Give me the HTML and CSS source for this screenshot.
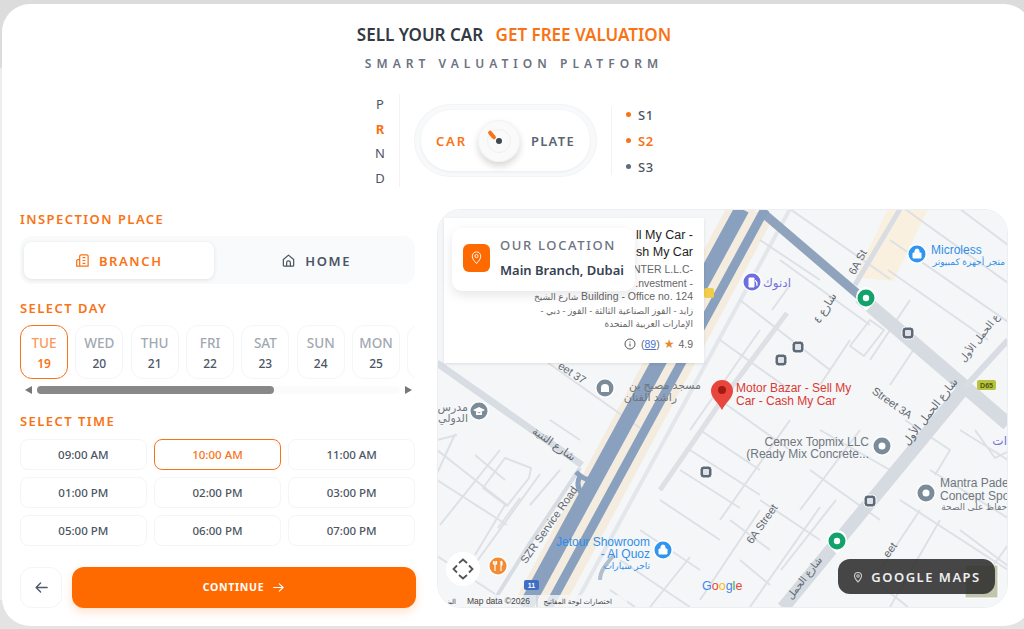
FILE: index.html
```html
<!DOCTYPE html>
<html lang="en">
<head>
<meta charset="utf-8">
<title>Sell Your Car</title>
<link rel="stylesheet" href="styles.css">
</head>
<body>
<main class="card">
  <header class="head">
    <h1 class="title"><span>SELL YOUR CAR</span> <em>GET FREE VALUATION</em></h1>
    <p class="sub">SMART VALUATION PLATFORM</p>
  </header>

  <section class="console">
    <div class="gears"><span>P</span><span class="on">R</span><span>N</span><span>D</span></div>
    <div class="pill">
      <div class="pill-in">
        <span class="pill-l">CAR</span>
        <span class="knob"><span class="knob-ring"></span><span class="knob-tick"></span><span class="knob-dot"></span></span>
        <span class="pill-r">PLATE</span>
      </div>
    </div>
    <div class="modes">
      <div class="mode hot"><i></i>S1</div>
      <div class="mode hot act"><i></i>S2</div>
      <div class="mode"><i></i>S3</div>
    </div>
  </section>

  <section class="main">
    <div class="form">
      <h2 class="lab">INSPECTION PLACE</h2>
      <div class="tabs">
        <button class="tab sel">
          <svg class="ic" viewBox="0 0 16 16" fill="none" stroke="currentColor" stroke-width="1.3"><path d="M5 14V3.5A1.5 1.5 0 0 1 6.500 2h6A1.500 1.500 0 0 1 14 3.500V14zM5 7H3a1.200 1.200 0 0 0-1.200 1.200V14H5M8 5h3M8 8h3M8 11h3"/></svg>
          BRANCH
        </button>
        <button class="tab">
          <svg class="ic" viewBox="0 0 16 16" fill="none" stroke="currentColor" stroke-width="1.300" stroke-linejoin="round"><path d="M2.500 7 8 2.300 13.500 7v6.200a.8.800 0 0 1-.8.800H3.300a.8.800 0 0 1-.8-.8z"/><path d="M6 14v-3.500a2 2 0 0 1 4 0V14"/></svg>
          HOME
        </button>
      </div>

      <h2 class="lab day-lab">SELECT DAY</h2>
      <div class="days">
        <div class="day sel"><b>TUE</b><span>19</span></div>
        <div class="day"><b>WED</b><span>20</span></div>
        <div class="day"><b>THU</b><span>21</span></div>
        <div class="day"><b>FRI</b><span>22</span></div>
        <div class="day"><b>SAT</b><span>23</span></div>
        <div class="day"><b>SUN</b><span>24</span></div>
        <div class="day"><b>MON</b><span>25</span></div>
        <div class="day day-cut"></div>
      </div>
      <div class="bar"><i class="tri-l"></i><span class="track"><span class="thumb"></span></span><i class="tri-r"></i></div>

      <h2 class="lab time-lab">SELECT TIME</h2>
      <div class="times">
        <div class="time">09:00 AM</div>
        <div class="time sel">10:00 AM</div>
        <div class="time">11:00 AM</div>
        <div class="time">01:00 PM</div>
        <div class="time">02:00 PM</div>
        <div class="time">03:00 PM</div>
        <div class="time">05:00 PM</div>
        <div class="time">06:00 PM</div>
        <div class="time">07:00 PM</div>
      </div>

      <div class="actions">
        <button class="back" aria-label="Back">
          <svg viewBox="0 0 16 16" fill="none" stroke="currentColor" stroke-width="1.500" stroke-linecap="round" stroke-linejoin="round"><path d="M14 8H2.500M7 3.200 2.300 8 7 12.800"/></svg>
        </button>
        <button class="go">CONTINUE
          <svg viewBox="0 0 16 16" fill="none" stroke="currentColor" stroke-width="1.400" stroke-linecap="round" stroke-linejoin="round"><path d="M2 8h11.500M9 3.500 13.700 8 9 12.500"/></svg>
        </button>
      </div>
    </div>

    <div class="map">
      <svg class="tiles" viewBox="437 209 571 399" xmlns="http://www.w3.org/2000/svg">
        <rect x="437" y="209" width="571" height="399" fill="#f5f6f8"/>
        <path d="M888 209h40l-35 72-38-4z" fill="#f9f0df"/>
        <path d="M752 209 537 608" stroke="#f3ecdf" stroke-width="46" fill="none"/>
        <path d="M790 209 573 608" stroke="#e3e6ea" stroke-width="4" fill="none"/>

        <g fill="none" stroke="#dde1e6" stroke-width="2" stroke-linejoin="round">
          <path d="M437 480l70 45 M437 440l20-5 M455 434l-20 44 M500 450l-60 75 M505 458l-22 30 24 18 22-28 2-10-26-10z M475 455l30 25 M550 420l30 20 M520 498l-22 30 M540 474l-65 90 M437 556l58 38 M437 450l70 55 M505 505l-30 50 M560 470l-30 35 M530 350l110 78"/>
          <path d="M680 470l60 38 M660 500l60 40 M640 530l60 40 M620 560l70 47 M700 430l60 40 M690 450l70 45 M720 400l70 50 M610 590l25 17 M650 607l40-50"/>
          <path d="M760 500l60 40 M730 520l40 30 M740 560l30 25 M700 600l60-90 M750 607l70-100 M790 420l-70 100 M860 430l-60 80 M810 470l70 50 M836 500l-55 70"/>
          <path d="M790 209l100 70 M780 260l90 65 M740 300l90 70 M720 340l70 50 M760 240l60 40 M850 340l-30 45 M870 320l14 10-20 26-14-10z M820 430l70 40 M910 300l-40 60 M960 209l48 36 M905 209l103 74 M890 240l118 82 M888 270l100 70 M920 340l-30 45"/>
          <path d="M905 420l45 30-15 25 M960 430l48 30 M930 470l78 48 M900 500l108 70 M880 570l40-60 M940 520l-50 87 M975 430l20 28 20-10 M960 530l48 36 M990 570l18-25 M880 585l28 22"/>
          <path d="M790 285l-18 25 M760 330l-70 100"/>
        </g>

        <g fill="none" stroke-linecap="butt">
          <path d="M437 363l145 102" stroke="#d8dde3" stroke-width="7"/>
          <path d="M580 468l-50 75-40 64" stroke="#d8dde3" stroke-width="4"/>
          <path d="M855 285 900 209" stroke="#d8dde3" stroke-width="5"/>
          <path d="M860 297 965 387 1008 424" stroke="#d5dbe1" stroke-width="14"/>
          <path d="M965 387 783 608" stroke="#d5dbe1" stroke-width="13"/>
          <path d="M965 387 1008 340" stroke="#d8dde3" stroke-width="6"/>
          <path d="M787 313 722 400 660 490" stroke="#dde1e6" stroke-width="5"/>
          <path d="M763 213 860 296" stroke="#8fa3bd" stroke-width="9"/>
          <path d="M742 209 525 608" stroke="#8aa0bf" stroke-width="15"/>
          <path d="M765 209 548 608" stroke="#8aa0bf" stroke-width="9"/>
          <path d="M600 470c-8 12-14 12-24 2M590 500c-10-6-15-14-10-24" stroke="#8aa0bf" stroke-width="5"/>
          <path d="M600 580c0-10 8-18 14-25" stroke="#b4bfce" stroke-width="4"/>
        </g>

        <text class="rd" transform="translate(552 447) rotate(35)" text-anchor="middle">شارع الثنية</text>
        <text class="rd" transform="translate(570 376) rotate(33)" text-anchor="middle">eet 37</text>
        <text class="rd" transform="translate(552 527) rotate(-55)" text-anchor="middle">SZR Service Road</text>
        <text class="rd" transform="translate(861 264) rotate(-62)" text-anchor="middle">6A St</text>
        <text class="rd" transform="translate(828 310) rotate(-58)" text-anchor="middle">شارع ٤</text>
        <text class="rd" transform="translate(765 526) rotate(-55)" text-anchor="middle">6A Street</text>
        <text class="rd" transform="translate(890 406) rotate(35)" text-anchor="middle">Street 3A</text>
        <text class="rd rd-s" transform="translate(982 340) rotate(-52)" text-anchor="middle">ع الحمل الأول</text>
        <text class="rd" transform="translate(933 414) rotate(-52)" text-anchor="middle">شارع الحمل الأول</text>
        <text class="rd rd-s" transform="translate(807 580) rotate(-52)" text-anchor="middle">شارع الحمل</text>
        <text class="rd" transform="translate(893 552) rotate(-55)" text-anchor="middle">eet</text>

        <g class="shield"><rect x="977" y="380" width="19" height="10" rx="2" fill="#b9c23c"/><text x="986.500" y="388" text-anchor="middle">D65</text></g>
        <g class="shield"><rect x="524" y="580" width="15" height="10" rx="2" fill="#3f6fc4"/><text class="sh-w" x="531.500" y="588" text-anchor="middle">11</text></g>
        <g class="shield"><rect x="704" y="288" width="10" height="10" rx="2" fill="#f1cc4d"/></g>

        <text class="poi-b" x="931" y="254">Microless</text>
        <text class="poi-b sm" x="1005" y="265" text-anchor="end">متجر أجهزة كمبيوتر</text>
        <text class="poi-p" x="791" y="287" text-anchor="end">ادنوك</text>
        <text class="poi-r" x="736" y="392">Motor Bazar - Sell My</text>
        <text class="poi-r" x="736" y="405">Car - Cash My Car</text>
        <text class="poi-g" x="869" y="446" text-anchor="end">Cemex Topmix LLC</text>
        <text class="poi-g" x="869" y="458" text-anchor="end">(Ready Mix Concrete...</text>
        <text class="poi-g" x="940" y="487">Mantra Pade</text>
        <text class="poi-g" x="940" y="500">Concept Spo</text>
        <text class="poi-g sm" x="1007" y="510" text-anchor="end">حفاظ على الصحة</text>
        <text class="poi-g ar" x="701" y="389" text-anchor="end">مسجد مصبح بن</text>
        <text class="poi-g ar" x="677" y="401" text-anchor="end">راشد الفنان</text>
        <text class="poi-g ar" x="468" y="411" text-anchor="end">مدرس</text>
        <text class="poi-g ar" x="468" y="422" text-anchor="end">الدولي</text>
        <text class="poi-b" x="650" y="546" text-anchor="end">Jetour Showroom</text>
        <text class="poi-b" x="650" y="558" text-anchor="end">- Al Quoz</text>
        <text class="poi-b sm" x="650" y="569" text-anchor="end">تاجر سيارات</text>
        <text class="poi-p" x="1007" y="445" text-anchor="end">ات</text>

        <path d="M866 311l-8-8a10 10 0 1 1 16 0z" fill="#fff"/><circle cx="866" cy="298" r="8.500" fill="#12a26b"/><circle cx="866" cy="298" r="3.200" fill="#fff"/>
        <path d="M837 554l-8-8a10 10 0 1 1 16 0z" fill="#fff"/><circle cx="837" cy="541" r="8.500" fill="#12a26b"/><circle cx="837" cy="541" r="3.200" fill="#fff"/>

        <g class="bus"><rect x="902" y="327" width="12" height="12" rx="3.500"/><rect x="905" y="330" width="6" height="6" rx="1" class="bus-in"/></g>
        <g class="bus"><rect x="792" y="341" width="12" height="12" rx="3.500"/><rect x="795" y="344" width="6" height="6" rx="1" class="bus-in"/></g>
        <g class="bus"><rect x="775" y="354" width="12" height="12" rx="3.500"/><rect x="778" y="357" width="6" height="6" rx="1" class="bus-in"/></g>
        <g class="bus"><rect x="700" y="466" width="12" height="12" rx="3.500"/><rect x="703" y="469" width="6" height="6" rx="1" class="bus-in"/></g>
        <g class="bus"><rect x="864" y="495" width="12" height="12" rx="3.500"/><rect x="867" y="498" width="6" height="6" rx="1" class="bus-in"/></g>

        <g><circle cx="917" cy="254" r="10" fill="#fff"/><circle cx="917" cy="254" r="8.500" fill="#2f95ee"/><path d="M913 253h8v5h-8zM915 253v-2a2 2 0 0 1 4 0v2" fill="#fff" stroke="#fff"/></g>
        <g><circle cx="752" cy="282" r="10" fill="#fff"/><circle cx="752" cy="282" r="8.500" fill="#6d6fdc"/><path d="M749 278h5v9h-5zM755 280l2 2v4" fill="#fff" stroke="#fff"/></g>
        <g><circle cx="663" cy="550" r="10" fill="#fff"/><circle cx="663" cy="550" r="8.500" fill="#2f95ee"/><path d="M659 549h8v5h-8zM661 549v-2a2 2 0 0 1 4 0v2" fill="#fff" stroke="#fff"/></g>
        <g><circle cx="498" cy="566" r="10" fill="#fff"/><circle cx="498" cy="566" r="8.500" fill="#f38b34"/><path d="M495 561v10M501 561v10M493.500 561v3h3v-3M501 561c1.500 1 1.500 4 0 5" fill="none" stroke="#fff" stroke-width="1.200"/></g>
        <g><circle cx="882" cy="446" r="10" fill="#fff"/><circle cx="882" cy="446" r="8.500" fill="#7a8b9a"/><circle cx="882" cy="446" r="3.500" fill="#fff"/></g>
        <g><circle cx="926" cy="493" r="10" fill="#fff"/><circle cx="926" cy="493" r="8.500" fill="#7a8b9a"/><circle cx="926" cy="493" r="3.500" fill="#fff"/></g>
        <g><circle cx="605" cy="388" r="10" fill="#fff"/><circle cx="605" cy="388" r="8.500" fill="#7a8b9a"/><path d="M601 392v-4a4 4 0 0 1 8 0v4z" fill="#fff"/></g>
        <g><circle cx="479" cy="411" r="10" fill="#fff"/><circle cx="479" cy="411" r="8.500" fill="#7a8b9a"/><path d="M473 410l6-3 6 3-6 3zM476 412v3h6v-3" fill="#fff"/></g>

        <path d="M722 410c-4-8-11-12-11-19a11 11 0 0 1 22 0c0 7-7 11-11 19z" fill="#e8453c"/><circle cx="722" cy="390" r="4" fill="#a31a14"/>

        <rect x="437" y="595" width="190" height="13" fill="#f5f6f8" opacity=".8"/>
        <text class="attr" x="467" y="604">Map data ©2026</text>
        <path d="M537 595v13" stroke="#c4c8ce"/>
        <text class="attr ar-s" x="612" y="604" text-anchor="end">اختصارات لوحة المفاتيح</text>
        <text class="attr ar-s" x="456" y="604" text-anchor="end">البنـ</text>
        <text class="glogo" x="702" y="590"><tspan fill="#4285f4">G</tspan><tspan fill="#ea4335">o</tspan><tspan fill="#fbbc05">o</tspan><tspan fill="#4285f4">g</tspan><tspan fill="#34a853">l</tspan><tspan fill="#ea4335">e</tspan></text>

        <rect x="965" y="565" width="33" height="33" fill="#c2c5ae" stroke="#fff"/>
        <circle cx="463" cy="569" r="17" fill="#fff"/>
        <path d="M459 563l4-3.500 4 3.500M459 575l4 3.500 4-3.500M457 565.500l-3.500 3.500 3.500 3.500M469 565.500l3.500 3.500-3.500 3.500" fill="none" stroke="#555" stroke-width="1.800"/>
      </svg>

      <div class="info">
        <p class="info-t">ll My Car -<br>sh My Car</p>
        <div class="info-a">
          <span class="ln">NTER L.L.C-</span>
          <span class="ln">.nvestment -</span>
          <span class="ln" dir="rtl">Building - Office no. 124 <span class="ara">شارع الشيخ</span></span>
          <span class="ln ara" dir="rtl">زايد - القوز الصناعية الثالثة - القوز - دبي -</span>
          <span class="ln ara" dir="rtl">الإمارات العربية المتحدة</span>
        </div>
        <p class="info-r">
          <svg class="i-ic" viewBox="0 0 12 12" fill="none" stroke="#555"><circle cx="6" cy="6" r="5"/><path d="M6 5.500v3M6 3.500v1"/></svg>
          <span class="i-n">(<u>89</u>)</span>
          <span class="star">★</span>
          <span>4.9</span>
        </p>
      </div>

      <div class="loc">
        <span class="loc-ic"><svg viewBox="0 0 16 16" fill="none" stroke="#fff" stroke-width="1"><path d="M8 14.500C5.500 11.500 3.500 9.500 3.500 6.500a4.500 4.500 0 0 1 9 0c0 3-2 5-4.500 8z"/><circle cx="8" cy="6.500" r="1.700"/></svg></span>
        <span class="loc-tx"><small>OUR LOCATION</small><strong>Main Branch, Dubai</strong></span>
      </div>

      <div class="gm">
        <svg viewBox="0 0 12 12" fill="none" stroke="#ccc" stroke-width="1.100"><path d="M6 11C4 8.800 2.500 7.200 2.500 5a3.500 3.500 0 0 1 7 0c0 2.200-1.500 3.800-3.500 6z"/><circle cx="6" cy="5" r="1.200"/></svg>
        GOOGLE MAPS
      </div>
    </div>
  </section>
</main>
</body>
</html>
```

FILE: styles.css
```css
* { box-sizing: border-box; }
html, body { height: 100%; }
body {
  margin: 0;
  height: 629px;
  overflow: hidden;
  background: linear-gradient(#dcdcdc 0 68px, #eeeeee 68px 600px, #e3e3e3 600px);
  font-family: "Noto Sans", "Open Sans", "DejaVu Sans", sans-serif;
  color: #4b5563;
}
button { font: inherit; border: 0; background: none; padding: 0; color: inherit; }

.card {
  margin: 4px 0 0 2px;
  width: 1030px;
  height: 622px;
  background: #fff;
  border-radius: 28px;
  padding-left: 18px;
  padding-right: 24px;
  display: flex;
  flex-direction: column;
}

.head { width: 988px; text-align: center; padding-top: 18px; }
.title { margin: 0; font-size: 17px; line-height: 26px; font-weight: 600; color: #333a44; }
.title span { margin-right: 8px; }
.title em { font-style: normal; color: #f97316; }
.sub { margin: 7px 0 0; font-size: 12px; line-height: 17px; font-weight: 600; letter-spacing: 5.050px; color: #6b7280; }

.console { display: flex; align-items: center; width: 988px; padding-left: 349px; margin-top: 21px; height: 95px; }
.gears {
  width: 31px;
  height: 93px;
  display: flex;
  flex-direction: column;
  justify-content: space-between;
  align-items: center;
  padding: 1px 8px 0 0;
  border-right: 1px solid #f1f3f5;
  font-size: 13px;
  line-height: 18px;
  color: #4b5563;
}
.gears .on { color: #f97316; font-weight: 700; }
.pill {
  margin-left: 14px;
  width: 183px;
  height: 73px;
  border-radius: 37px;
  background: #f8f9fa;
  padding: 6px 7px;
  box-shadow: inset 0 0 0 1px #f3f4f6;
}
.pill-in {
  height: 100%;
  border-radius: 31px;
  background: #fff;
  display: flex;
  align-items: center;
  justify-content: space-between;
  padding: 0 15px;
  box-shadow: 0 1px 3px rgba(0,0,0,.06);
  font-size: 13px;
  font-weight: 600;
  letter-spacing: 1.300px;
}
.pill-l { color: #f97316; letter-spacing: 1.800px; }
.pill-r { color: #5b6472; }
.knob {
  position: relative;
  width: 42px;
  height: 42px;
  border-radius: 50%;
  background: #fafafa;
  box-shadow: 0 4px 7px rgba(0,0,0,.16), inset 0 0 0 1px #f2f2f2;
  margin-left: 1px;
}
.knob-ring { position: absolute; left: 9px; top: 9px; width: 24px; height: 24px; border-radius: 50%; border: 1px solid #f0f0f0; }
.knob-tick { position: absolute; left: 9px; top: 13px; width: 10px; height: 4px; border-radius: 2px; background: #f97316; transform: rotate(50deg); }
.knob-dot { position: absolute; left: 18px; top: 18px; width: 6px; height: 6px; border-radius: 50%; background: #3f4753; }
.modes {
  margin-left: 14px;
  height: 68px;
  border-left: 1px solid #f1f3f5;
  padding-left: 14px;
  display: flex;
  flex-direction: column;
  justify-content: space-between;
}
.mode { display: flex; align-items: center; gap: 7px; font-size: 13px; line-height: 16px; font-weight: 500; letter-spacing: .5px; color: #4b5563; }
.mode i { width: 5px; height: 5px; border-radius: 50%; background: #5f6b7e; }
.mode.hot i { background: #f97316; }
.mode.act { color: #f97316; font-weight: 600; }

.main { display: flex; gap: 22px; margin-top: 21px; width: 988px; }
.form { width: 395px; flex: none; display: flex; flex-direction: column; padding-top: 1px; }

.lab { margin: 0; font-size: 13px; line-height: 18px; font-weight: 600; letter-spacing: 1.450px; color: #f97316; }

.tabs { display: flex; gap: 8px; margin-top: 8px; height: 48px; padding: 6px 4px 5px; border-radius: 12px; background: #f8fafc; }
.tab { flex: 1; display: flex; align-items: center; justify-content: center; gap: 9px; font-size: 13px; font-weight: 600; letter-spacing: 1.600px; color: #4b5563; border-radius: 8px; }
.tab.sel { background: #fff; color: #f97316; box-shadow: 0 1px 4px rgba(0,0,0,.1); }
.ic { width: 15px; height: 15px; }

.day-lab { margin-top: 15px; }
.days { display: flex; gap: 7.350px; margin-top: 8px; overflow: hidden; }
.day {
  flex: none;
  width: 48px;
  height: 54px;
  border: 1px solid #f4f5f7;
  border-radius: 12px;
  display: flex;
  flex-direction: column;
  align-items: center;
  justify-content: center;
  padding-top: 2px;
}
.day b { font-size: 13.500px; line-height: 18px; font-weight: 500; color: #a2a8b2; }
.day span { font-size: 12px; line-height: 18px; font-weight: 500; color: #4b5563; margin-top: 3px; }
.day.sel { border-color: #f97316; }
.day.sel b { color: #fb9a5c; }
.day.sel span { color: #f97316; font-weight: 600; }

.bar { display: flex; align-items: center; height: 11px; margin-top: 5px; padding: 0 3px 0 5px; gap: 5px; }
.tri-l, .tri-r { flex: none; width: 0; height: 0; border-top: 4px solid transparent; border-bottom: 4px solid transparent; }
.tri-l { border-right: 7px solid #777; }
.tri-r { border-left: 7px solid #777; }
.track { flex: 1; height: 8px; background: #fbfbfb; border-radius: 4px; }
.thumb { display: block; width: 237px; height: 8px; background: #888; border-radius: 4px; }

.time-lab { margin-top: 17px; }
.times { display: grid; grid-template-columns: repeat(3, 1fr); gap: 7.500px; margin-top: 9px; }
.time {
  height: 30.500px;
  display: flex;
  align-items: center;
  justify-content: center;
  border: 1px solid #f4f5f7;
  border-radius: 8px;
  font-size: 11.500px;
  font-weight: 500;
  color: #4b5563;
}
.time.sel { border-color: #f97316; color: #f97316; }

.actions { display: flex; gap: 10px; margin-top: 21px; }
.back { width: 42px; height: 41px; border: 1px solid #f4f5f7; border-radius: 12px; display: flex; align-items: center; justify-content: center; color: #4f5a6b; }
.back svg { width: 15px; height: 15px; }
.go {
  flex: 1;
  height: 41px;
  border-radius: 12px;
  background: #ff6a00;
  color: #fff;
  font-size: 10.500px;
  font-weight: 700;
  letter-spacing: .7px;
  display: flex;
  align-items: center;
  justify-content: center;
  gap: 8px;
  box-shadow: 0 4px 10px rgba(255,106,0,.2);
  margin-right: -1px;
}
.go svg { width: 13px; height: 13px; }

.map {
  position: relative;
  width: 571px;
  height: 399px;
  border-radius: 24px;
  overflow: hidden;
  border: 1px solid #eceef1;
  flex: none;
}
.tiles { position: absolute; left: -1px; top: -1px; width: 571px; height: 399px; display: block; font-family: "Liberation Sans", "DejaVu Sans", sans-serif; }
.rd { font-size: 11px; fill: #5f6670; }
.rd.rd-s { font-size: 10px; }
.shield text { font-size: 7px; font-weight: 700; fill: #4d5a16; }
.shield .sh-w { fill: #fff; }
.poi-b { font-size: 12px; fill: #2f8fe8; }
.poi-p { font-size: 12px; fill: #7272d8; }
.poi-r { font-size: 12px; fill: #d93a32; }
.poi-g { font-size: 12px; fill: #6f7780; }
.poi-g.ar { font-size: 11px; }
.poi-b.sm, .poi-g.sm { font-size: 9px; }
.bus rect { fill: #5d6b78; stroke: #fff; }
.bus .bus-in { fill: #dfe3e7; stroke: none; }
.attr { font-size: 8.500px; fill: #444; }
.attr.ar-s { font-size: 7px; }
.glogo { font-size: 12.500px; font-weight: 400; }

.info {
  position: absolute;
  left: 6px;
  top: 8px;
  width: 260px;
  height: 145px;
  background: #fff;
  padding: 9px 11px 0 8px;
  text-align: right;
  font-family: "Liberation Sans", "DejaVu Sans", sans-serif;
  box-shadow: 0 1px 3px rgba(0,0,0,.1);
}
.info p { margin: 0; }
.info-t { font-size: 12.500px; line-height: 17px; color: #222; font-weight: 500; }
.info-a { font-size: 10.500px; line-height: 13.500px; color: #666; margin-top: 1px; }
.ln { display: block; text-align: right; }
.ln:first-child { padding-top: 1px; }
.ara { font-size: 9px; }
.ln.ara { line-height: 13.500px; }
.info .info-r { display: flex; align-items: center; justify-content: flex-end; gap: 4px; font-size: 10.500px; color: #666; position: absolute; right: 11px; top: 120px; }
.i-ic { width: 12px; height: 12px; margin-right: 1px; }
.i-n u { color: #4a70d4; }
.star { color: #e7882c; font-size: 12px; line-height: 12px; }

.loc {
  position: absolute;
  left: 14px;
  top: 18px;
  width: 183px;
  height: 63px;
  background: #fff;
  border-radius: 10px;
  box-shadow: 0 4px 12px rgba(0,0,0,.1);
  display: flex;
  align-items: center;
  gap: 10px;
  padding: 0 0 4px 11px;
}
.loc-ic { width: 27px; height: 28px; border-radius: 6px; background: #ff6a00; display: flex; align-items: center; justify-content: center; flex: none; }
.loc-ic svg { width: 15px; height: 15px; }
.loc-tx { display: flex; flex-direction: column; gap: 7px; white-space: nowrap; }
.loc-tx small { font-size: 13px; line-height: 18px; font-weight: 500; letter-spacing: 1.650px; color: #6b7280; }
.loc-tx strong { font-size: 13px; line-height: 18px; font-weight: 600; color: #374151; }

.gm {
  position: absolute;
  left: 400px;
  top: 349px;
  width: 157px;
  height: 35px;
  border-radius: 12px;
  background: rgba(45,45,45,.88);
  color: #eee;
  display: flex;
  align-items: center;
  justify-content: center;
  gap: 7px;
  font-size: 13px;
  font-weight: 600;
  letter-spacing: 1.500px;
}
.gm svg { width: 12px; height: 12px; }
```
